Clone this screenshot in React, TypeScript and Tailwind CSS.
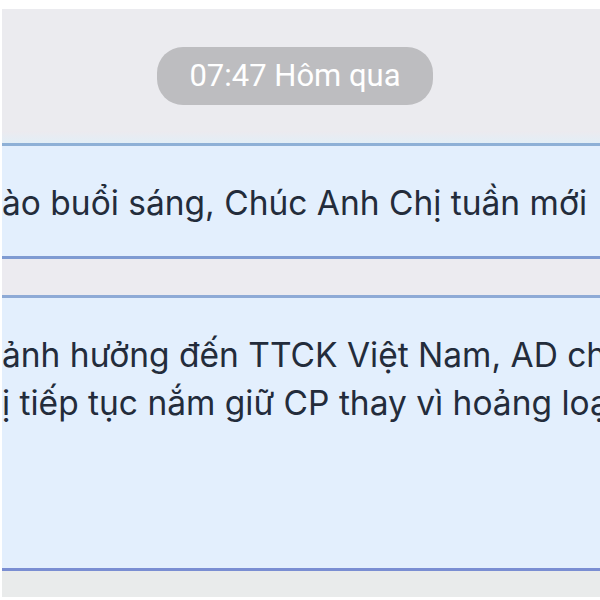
export default function App() {
  const body = "font-['Inter','Noto_Sans',sans-serif] text-[33.5px] leading-[48px] text-[#232c3b] whitespace-nowrap";

  return (
    <div className="w-[600px] h-[600px] overflow-hidden bg-white pt-[9px] pl-[2px]">
      <div className="flex h-full flex-col bg-[#ebebef]">
        {/* time divider */}
        <div className="flex h-[122px] justify-center pr-[12px] pt-[38px]">
          <div className="flex h-[58px] w-[276px] items-center justify-center rounded-[26px] bg-[#bdbdc0] font-['Roboto',sans-serif] text-[31px] text-white">
            07:47 Hôm qua
          </div>
        </div>
        <div className="h-[12px] bg-gradient-to-b from-[#eceaef] to-[#e2eef6]" />

        {/* message 1 */}
        <div className="h-[116px] overflow-hidden border-y-[3px] border-t-[#8eb0d6] border-b-[#7f9bd2] bg-[#e3effd] pt-[33px]">
          <p className={body}>ào buổi sáng, Chúc Anh Chị tuần mới</p>
        </div>

        <div className="h-[36px] bg-[#ecebf0]" />

        {/* message 2 */}
        <div className="h-[276px] overflow-hidden border-y-[3px] border-t-[#8eaad6] border-b-[#7a8ed2] bg-[#e3effd] pt-[33px]">
          <p className={body}>ảnh hưởng đến TTCK Việt Nam, AD chỉ</p>
          <p className={body}>ị tiếp tục nắm giữ CP thay vì hoảng loạn</p>
        </div>

        <div className="h-[26px] bg-[#e9ebeb]" />
        <div className="h-[3px] bg-white" />
      </div>
    </div>
  );
}
